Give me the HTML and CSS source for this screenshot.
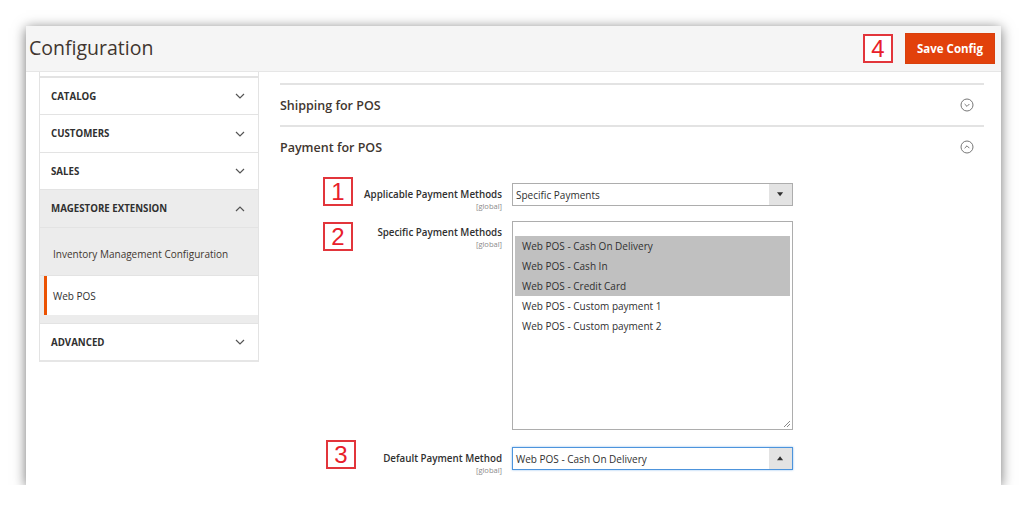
FILE: index.html
```html
<!DOCTYPE html>
<html>
<head>
<meta charset="utf-8">
<link rel="stylesheet" href="styles.css">
</head>
<body>
<div class="window">
  <header class="page-header">
    <h1 class="page-title">Configuration</h1>
    <div class="actions">
      <span class="num-box num-box--head">4</span>
      <button class="btn-primary">Save Config</button>
    </div>
  </header>
  <div class="page-body">
    <aside class="sidebar">
      <div class="side-stub"></div>
      <div class="side-item"><span>CATALOG</span><svg class="chev" viewBox="0 0 10 6"><path d="M1 1l4 4 4-4"/></svg></div>
      <div class="side-item side-item--tall"><span>CUSTOMERS</span><svg class="chev" viewBox="0 0 10 6"><path d="M1 1l4 4 4-4"/></svg></div>
      <div class="side-item"><span>SALES</span><svg class="chev" viewBox="0 0 10 6"><path d="M1 1l4 4 4-4"/></svg></div>
      <div class="side-item side-item--open"><span>MAGESTORE EXTENSION</span><svg class="chev" viewBox="0 0 10 6"><path d="M1 5l4-4 4 4"/></svg></div>
      <div class="side-sub">
        <div class="sub-item sub-item--first">Inventory Management Configuration</div>
        <div class="sub-item sub-item--active">Web POS</div>
        <div class="sub-gap"></div>
      </div>
      <div class="side-item side-item--last"><span>ADVANCED</span><svg class="chev" viewBox="0 0 10 6"><path d="M1 1l4 4 4-4"/></svg></div>
    </aside>
    <main class="main">
      <div class="section-head">
        <span>Shipping for POS</span>
        <svg class="circle-icon" viewBox="0 0 14 14"><circle cx="7" cy="7" r="6"/><path d="M4.6 6l2.4 2.4L9.4 6"/></svg>
      </div>
      <div class="section-head">
        <span>Payment for POS</span>
        <svg class="circle-icon" viewBox="0 0 14 14"><circle cx="7" cy="7" r="6"/><path d="M4.6 8.2L7 5.8l2.4 2.4"/></svg>
      </div>
      <div class="fields">
        <div class="field field--first">
          <span class="num-box">1</span>
          <div class="label"><div class="label-text">Applicable Payment Methods</div><div class="scope">[global]</div></div>
          <div class="select">
            <span class="select-value">Specific Payments</span>
            <span class="select-btn"><svg viewBox="0 0 8 5"><path d="M0 0h7L3.5 4.5z"/></svg></span>
          </div>
        </div>
        <div class="field field--multi">
          <span class="num-box">2</span>
          <div class="label"><div class="label-text">Specific Payment Methods</div><div class="scope">[global]</div></div>
          <div class="multiselect">
            <div class="option option--sel">Web POS - Cash On Delivery</div>
            <div class="option option--sel">Web POS - Cash In</div>
            <div class="option option--sel">Web POS - Credit Card</div>
            <div class="option">Web POS - Custom payment 1</div>
            <div class="option">Web POS - Custom payment 2</div>
            <svg class="resize" viewBox="0 0 8 8"><path d="M7 1L1 7M7 4L4 7"/></svg>
          </div>
        </div>
        <div class="field field--last">
          <span class="num-box num-box--shift">3</span>
          <div class="label"><div class="label-text">Default Payment Method</div><div class="scope">[global]</div></div>
          <div class="select select--focus">
            <span class="select-value">Web POS - Cash On Delivery</span>
            <span class="select-btn"><svg viewBox="0 0 8 5"><path d="M0 4.5h7L3.5 0z"/></svg></span>
          </div>
        </div>
      </div>
    </main>
  </div>
</div>
</body>
</html>
```
FILE: styles.css
```css
* { box-sizing: border-box; }
html, body { margin: 0; padding: 0; background: #fff; }
body {
  font-family: "Open Sans", "Liberation Sans", sans-serif;
  color: #303030;
  padding: 26px 0 0 26px;
}
.window {
  width: 975px;
  height: 459px;
  background: #fff;
  box-shadow: 0 2px 12px rgba(0,0,0,0.55);
  display: flex;
  flex-direction: column;
  overflow: hidden;
}
.page-header {
  height: 46px;
  background: #f5f5f5;
  border-bottom: 1px solid #e6e6e6;
  display: flex;
  align-items: center;
  justify-content: space-between;
  padding: 0 6px 0 3px;
  flex: none;
}
.page-title {
  margin: 0 0 2px 0;
  font-weight: 400;
  font-size: 19.5px;
  color: #41362f;
}
.actions {
  display: flex;
  align-items: center;
  gap: 12px;
}
.btn-primary {
  width: 90px;
  height: 31px;
  background: #e2410b;
  border: 1px solid #d8400c;
  color: #fff;
  font-family: "Open Sans", "Liberation Sans", sans-serif;
  font-weight: 700;
  font-size: 11.5px;
  padding: 0;
  margin-top: -1px;
}
.num-box {
  width: 30px;
  height: 29px;
  border: 2px solid #e2353b;
  color: #e8202a;
  font-family: "Liberation Sans", Arial, sans-serif;
  font-size: 24px;
  line-height: 25px;
  text-align: center;
  background: #fff;
  flex: none;
}
.page-body {
  display: flex;
  flex: 1;
}
.sidebar {
  width: 220px;
  margin-left: 13px;
  flex: none;
  display: flex;
  flex-direction: column;
}
.side-stub {
  height: 6px;
  border-left: 1px solid #e3e3e3;
  border-right: 1px solid #e3e3e3;
  border-bottom: 2px solid #e3e3e3;
}
.side-item {
  height: 37px;
  display: flex;
  align-items: center;
  justify-content: space-between;
  padding: 0 13px 0 11px;
  border-left: 1px solid #e3e3e3;
  border-right: 1px solid #e3e3e3;
  border-bottom: 1px solid #e3e3e3;
  font-size: 9.7px;
  font-weight: 700;
  color: #303030;
  background: #fff;
}
.side-item--tall { height: 38px; }
.side-item--open { background: #ececec; height: 38px; }
.side-item--last { border-bottom: 2px solid #e6e6e6; height: 38px; }
.chev {
  width: 10px;
  height: 6px;
  fill: none;
  stroke: #555;
  stroke-width: 1.2;
}
.side-sub {
  display: flex;
  flex-direction: column;
  background: #ececec;
  border-right: 1px solid #e3e3e3;
  border-left: 1px solid #e3e3e3;
}
.sub-item {
  height: 48px;
  display: flex;
  align-items: center;
  padding-left: 13px;
  font-size: 10px;
  color: #41362f;
  border-bottom: 1px solid #e3e3e3;
}
.sub-item--first { padding-top: 5px; }
.sub-item--active {
  height: 39px;
  background: #fff;
  margin-left: 4px;
  border-left: 3px solid #eb5202;
  padding-left: 6px;
  color: #303030;
  border-bottom: none;
}
.sub-gap {
  height: 9px;
  border-bottom: 1px solid #e3e3e3;
}
.main {
  width: 704px;
  margin-left: 21px;
  padding-top: 11px;
  flex: none;
}
.section-head {
  height: 42px;
  border-top: 2px solid #e3e3e3;
  display: flex;
  align-items: center;
  justify-content: space-between;
  padding: 0 10px 0 0;
  font-size: 12.5px;
  font-weight: 600;
  color: #41362f;
}
.circle-icon {
  width: 14px;
  height: 14px;
  fill: none;
  stroke: #777;
  stroke-width: 1;
}
.fields {
  padding-top: 10px;
}
.field {
  display: grid;
  grid-template-columns: 30px minmax(0, 1fr) 281px;
  column-gap: 10px;
  padding: 0 191px 0 43px;
  align-items: start;
}
.field--first { margin-bottom: 15px; grid-template-rows: 29px; }
.field--first .select { margin-top: 6px; }
.field--first .label { padding-top: 11px; }
.field--multi { margin-bottom: 10px; }
.field--multi .num-box { margin-top: 1px; }
.field--multi .label { padding-top: 5px; }
.field--last .select { margin-top: 7px; }
.field--last .label { padding-top: 12px; }
.num-box--shift { margin-left: 3px; }
.label {
  text-align: right;
  justify-self: end;
  white-space: nowrap;
}
.label-text {
  font-size: 9.8px;
  font-weight: 600;
  color: #303030;
  line-height: 14px;
}
.scope {
  font-size: 7.5px;
  color: #8a8a8a;
  line-height: 9px;
}
.select {
  height: 23px;
  border: 1px solid #adadad;
  display: flex;
  align-items: center;
  background: #fff;
}
.select--focus {
  border-color: #4d94dc;
  box-shadow: 0 0 2px rgba(0, 110, 220, 0.45);
}
.select-value {
  flex: 1;
  padding-left: 3px;
  font-size: 10px;
  color: #303030;
}
.select-btn {
  width: 23px;
  height: 100%;
  background: #e3e3e3;
  display: flex;
  align-items: center;
  justify-content: center;
}
.select-btn svg {
  width: 7px;
  height: 5px;
  fill: #303030;
}
.multiselect {
  position: relative;
  height: 209px;
  border: 1px solid #adadad;
  padding: 14px 2px 0 2px;
  background: #fff;
}
.option {
  height: 20px;
  line-height: 20px;
  padding-left: 7px;
  font-size: 10px;
  color: #303030;
}
.option--sel { background: #c0c0c0; }
.resize {
  position: absolute;
  right: 1px;
  bottom: 1px;
  width: 8px;
  height: 8px;
  fill: none;
  stroke: #8a8a8a;
  stroke-width: 1;
}
```
